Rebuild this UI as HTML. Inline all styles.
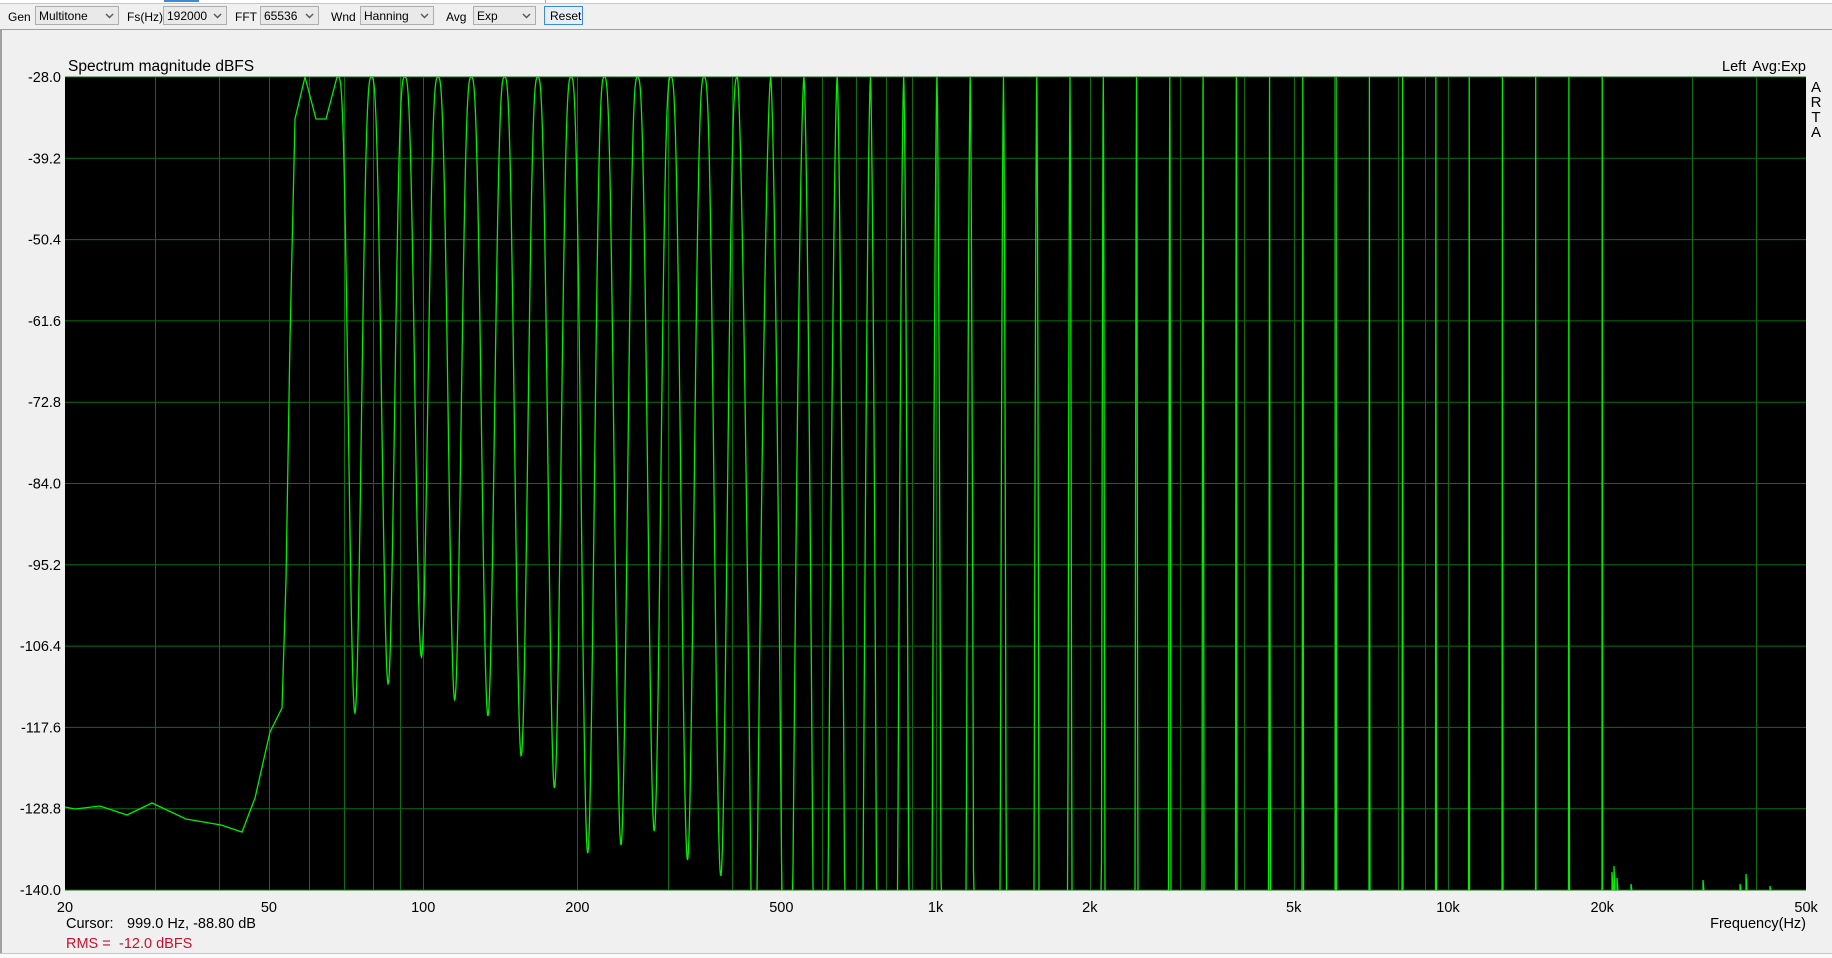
<!DOCTYPE html>
<html><head><meta charset="utf-8"><style>
html,body{margin:0;padding:0;width:1832px;height:958px;overflow:hidden;background:#f0f0f0;font-family:"Liberation Sans",Arial,sans-serif;}
.tb{position:absolute;font-size:12px;color:#000;}
.cb{position:absolute;top:6px;height:19px;border:1px solid #adadad;background:#e9e9e9;box-sizing:border-box;font-size:12px;line-height:19px;padding-left:3px;}
.cb svg{position:absolute;right:4px;top:6px;}
</style></head><body>
<div style="position:absolute;left:0;top:0;width:1832px;height:3px;background:#fff;border-bottom:1px solid #c8c8c8"></div>
<div style="position:absolute;left:164px;top:0;width:35px;height:2px;background:#3c8ad8"></div>
<div style="position:absolute;left:545px;top:0;width:1px;height:3px;background:#aaa"></div>

<div class="tb" style="left:8px;top:10px">Gen</div>
<div class="cb" style="left:35px;width:84px">Multitone<svg width="9" height="6"><path d="M1 1L4.5 4.5L8 1" stroke="#555" stroke-width="1.4" fill="none"/></svg></div>
<div class="tb" style="left:127px;top:10px">Fs(Hz)</div>
<div class="cb" style="left:163px;width:64px">192000<svg width="9" height="6"><path d="M1 1L4.5 4.5L8 1" stroke="#555" stroke-width="1.4" fill="none"/></svg></div>
<div class="tb" style="left:235px;top:10px">FFT</div>
<div class="cb" style="left:260px;width:59px">65536<svg width="9" height="6"><path d="M1 1L4.5 4.5L8 1" stroke="#555" stroke-width="1.4" fill="none"/></svg></div>
<div class="tb" style="left:331px;top:10px">Wnd</div>
<div class="cb" style="left:360px;width:74px">Hanning<svg width="9" height="6"><path d="M1 1L4.5 4.5L8 1" stroke="#555" stroke-width="1.4" fill="none"/></svg></div>
<div class="tb" style="left:446px;top:10px">Avg</div>
<div class="cb" style="left:473px;width:63px">Exp<svg width="9" height="6"><path d="M1 1L4.5 4.5L8 1" stroke="#555" stroke-width="1.4" fill="none"/></svg></div>
<div class="cb" style="left:544px;width:39px;border-color:#3c8ad8;background:#e8eef5;padding-left:5px">Reset</div>

<div style="position:absolute;left:0;top:29px;width:1832px;height:1px;background:#a0a0a0"></div>
<div style="position:absolute;left:0;top:29px;width:2px;height:925px;background:#a0a0a0"></div>
<div style="position:absolute;left:0;top:953px;width:1832px;height:1px;background:#c8c8c8"></div>
<div style="position:absolute;left:0;top:954px;width:1832px;height:4px;background:#fafafa"></div>

<svg id="plot" width="1832" height="958" style="position:absolute;left:0;top:0" font-family="Liberation Sans, Arial, sans-serif">
<defs><clipPath id="cp"><rect x="65" y="77" width="1741" height="813"/></clipPath></defs>
<rect x="65" y="77" width="1741" height="813" fill="#000"/>
<g id="grid" stroke="#0b6f0b" stroke-width="1"></g>
<g clip-path="url(#cp)"><path id="spec" fill="none" stroke="#00ee00" stroke-width="1.3"/></g>
<text x="68" y="71" font-size="15.5">Spectrum magnitude dBFS</text>
<text x="1722" y="71" font-size="14.5">Left</text>
<text x="1806" y="71" font-size="14.5" text-anchor="end">Avg:Exp</text>
<g font-size="15" text-anchor="middle"><text x="1816" y="92">A</text><text x="1816" y="107">R</text><text x="1816" y="122">T</text><text x="1816" y="137">A</text></g>
<g id="ylab" font-size="14.5" text-anchor="end"></g>
<g id="xlab" font-size="14.5" text-anchor="middle"></g>
<text x="66" y="928" font-size="14.5">Cursor:</text>
<text x="127" y="928" font-size="14.5">999.0 Hz, -88.80 dB</text>
<text x="66" y="948" font-size="14.5" fill="#c8102e">RMS =</text>
<text x="119" y="948" font-size="14.5" fill="#c8102e">-12.0 dBFS</text>
<text x="1806" y="928" font-size="14.5" text-anchor="end">Frequency(Hz)</text>
</svg>
<script>
function fx(f){return 65+512.4*Math.log10(f/20);}
var g=document.getElementById('grid'),s='';
for(var i=0;i<=10;i++){var y=77+i*81.3;s+='<line x1="65" x2="1806" y1="'+y.toFixed(1)+'" y2="'+y.toFixed(1)+'"/>';}
var fs=[30,40,50,60,70,80,90,100,200,300,400,500,600,700,800,900,1000,2000,3000,4000,5000,6000,7000,8000,9000,10000,20000,30000,40000];
fs.forEach(function(f){var x=Math.round(fx(f))+0.5;s+='<line x1="'+x+'" x2="'+x+'" y1="77" y2="890"/>';});
g.innerHTML=s;
var yl=document.getElementById('ylab'),t='';
var lab=["-28.0","-39.2","-50.4","-61.6","-72.8","-84.0","-95.2","-106.4","-117.6","-128.8","-140.0"];
for(var i=0;i<=10;i++){t+='<text x="61" y="'+(77+i*81.3+5).toFixed(1)+'">'+lab[i]+'</text>';}
yl.innerHTML=t;
var xl=document.getElementById('xlab'),u='';
[[20,"20"],[50,"50"],[100,"100"],[200,"200"],[500,"500"],[1000,"1k"],[2000,"2k"],[5000,"5k"],[10000,"10k"],[20000,"20k"],[50000,"50k"]].forEach(function(a){u+='<text x="'+fx(a[0]).toFixed(1)+'" y="912">'+a[1]+'</text>';});
xl.innerHTML=u;
var pts=[[65,807],[75,809],[100,806],[127,815],[152,803],[186,819],[221,825],[242,832],[255,798],[270,732],[282,708],[286,580],[290,339],[295,119],[305,77],[316,119],[326,119],[337,77]];
var P=[];for(var k=0;k<40;k++)P.push(305+k*33.2615);
var T=[119,713,684,657,700,716,756,788,853,845,831,860,876];
function D(k){if(k<T.length)return T[k]-77;return 813*Math.pow(1.38,k-12);}
var half=33.2615/2;
var xs=[];
for(var x=337.5;x<=1806;x+=0.5)xs.push(x);
for(var k=2;k<40;k++)xs.push(P[k]);
xs.sort(function(a,b){return a-b;});
xs.forEach(function(x){
 var kL=Math.floor((x-305)/33.2615+1e-9);var dl=x-P[kL];var d,gap;
 if(kL>=39){d=x-P[39];gap=45;}
 else{var dr=P[kL+1]-x;d=Math.min(dl,dr);gap=kL;}
 var uu=Math.min(1,d/half);
 var f=Math.pow((1-Math.cos(Math.PI*uu))/2,1.5);
 if(gap>=13)f=Math.pow(uu,1.6);
 var y=77+D(gap)*f;
 if(y>892)y=892;
 pts.push([x,y]);
});
var dstr='M'+pts.map(function(p){return p[0].toFixed(1)+' '+p[1].toFixed(1);}).join('L');
[[1612,872],[1614,866],[1617,878],[1631,884],[1703,880],[1740,884],[1746,874],[1770,886]].forEach(function(p){dstr+='M'+p[0]+' 891L'+p[0]+' '+p[1]+'L'+(p[0]+1)+' 891';});
document.getElementById('spec').setAttribute('d',dstr);
</script>
</body></html>
